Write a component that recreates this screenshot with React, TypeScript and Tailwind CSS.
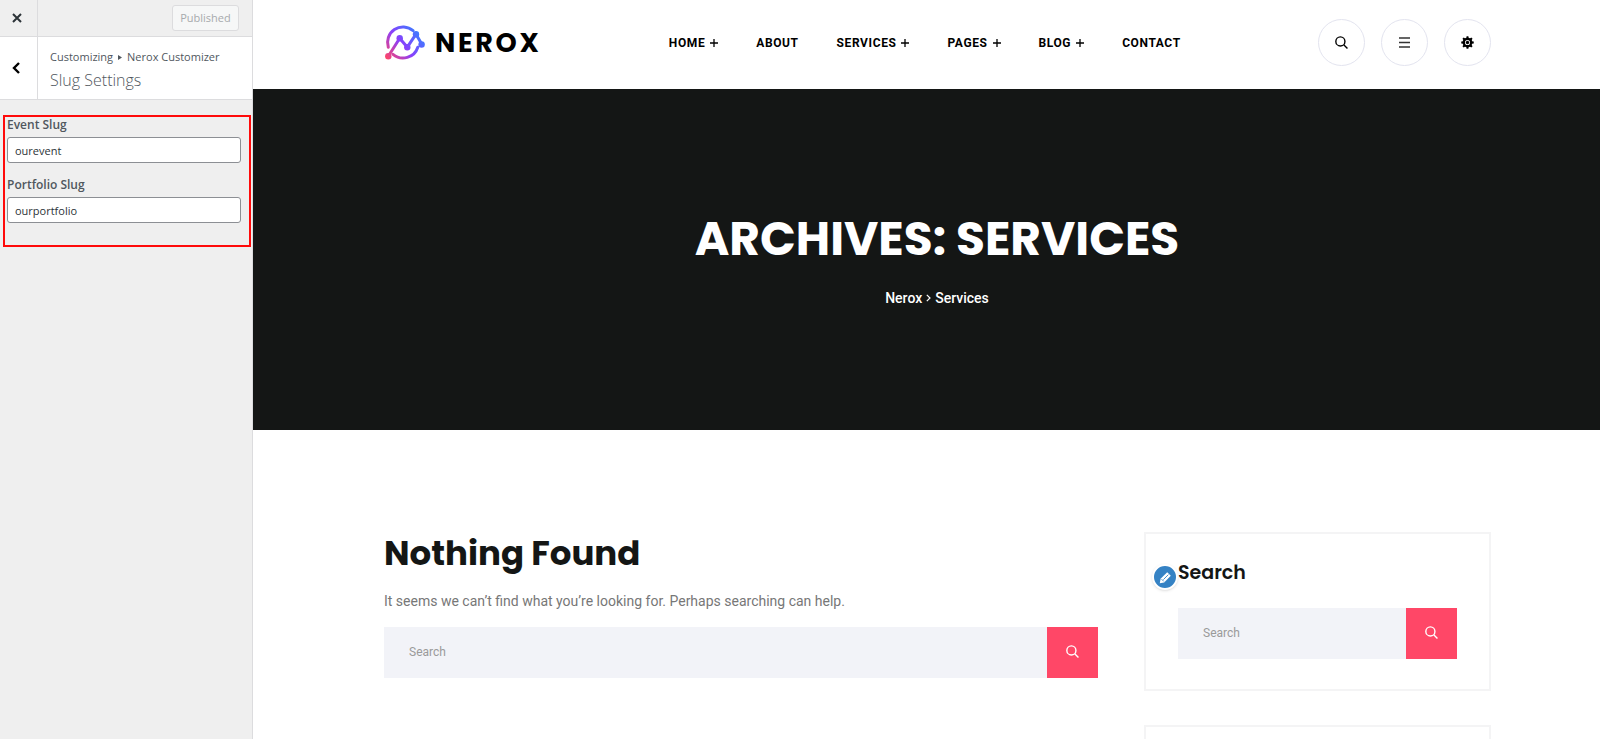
import { useState } from 'react';

const NAV_ITEMS = [
  { label: 'HOME', hasMenu: true },
  { label: 'ABOUT', hasMenu: false },
  { label: 'SERVICES', hasMenu: true },
  { label: 'PAGES', hasMenu: true },
  { label: 'BLOG', hasMenu: true },
  { label: 'CONTACT', hasMenu: false },
];

const GEAR_TEETH = [0, 45, 90, 135, 180, 225, 270, 315];

function SearchIcon({ className }: { className: string }) {
  return (
    <svg className={className} viewBox="0 0 14 14" fill="none" stroke="currentColor" strokeWidth="1.5">
      <circle cx="5.8" cy="5.8" r="4.9" />
      <path d="M9.4 9.4l4 4" />
    </svg>
  );
}

function GearIcon() {
  return (
    <svg className="w-[13px] h-[13px]" viewBox="0 0 26 26" fill="none" stroke="currentColor">
      {GEAR_TEETH.map((angle) => (
        <path key={angle} d="M10.4 5L11.2 0.5h3.6L15.6 5z" fill="currentColor" stroke="none" transform={`rotate(${angle} 13 13)`} />
      ))}
      <circle cx="13" cy="13" r="7.4" strokeWidth="4.6" />
      <circle cx="13" cy="13" r="3.4" fill="currentColor" stroke="none" />
    </svg>
  );
}

function Logo() {
  return (
    <a href="#home" className="flex items-center gap-[10px] text-black">
      <svg className="w-[41px] h-9" viewBox="0 0 41 36" fill="none">
        <defs>
          <linearGradient id="logoStroke" gradientUnits="userSpaceOnUse" x1="2" y1="33" x2="34" y2="6">
            <stop offset="0" stopColor="#ff4568" />
            <stop offset="0.5" stopColor="#8a3ffc" />
            <stop offset="1" stopColor="#3d7bff" />
          </linearGradient>
        </defs>
        <g stroke="url(#logoStroke)" strokeWidth="3" strokeLinecap="round" strokeLinejoin="round">
          <path d="M4.3 22.3A15.5 15.5 0 0 1 29.1 5.7" />
          <path d="M33.8 22.2A15.5 15.5 0 0 1 9 29.3" />
          <path d="M4.3 31.2L15.7 13.2L23.3 22.2L32 9.2L38 19.5" />
        </g>
        <g fill="url(#logoStroke)">
          <circle cx="4.3" cy="31.2" r="3.2" />
          <circle cx="15.7" cy="13.2" r="3.2" />
          <circle cx="23.3" cy="22.2" r="3.2" />
          <circle cx="32" cy="9.2" r="3.2" />
          <circle cx="37.6" cy="19.5" r="3.2" />
        </g>
      </svg>
      <span className="font-[Poppins,Inter,sans-serif] text-[27px] leading-9 font-bold tracking-widest">NEROX</span>
    </a>
  );
}

function SlugField({ id, label, initial }: { id: string; label: string; initial: string }) {
  const [value, setValue] = useState(initial);

  return (
    <div>
      <label htmlFor={id} className="block text-[12px] leading-[14px] font-semibold text-[#50575e]">
        {label}
      </label>
      <input
        id={id}
        type="text"
        value={value}
        onChange={(e) => setValue(e.target.value)}
        className="block w-full h-[26px] mt-[5px] px-[7px] rounded-[3px] border border-[#8c8f94] bg-white text-[11px] text-[#2c3338]"
      />
    </div>
  );
}

function SearchForm({ label }: { label: string }) {
  return (
    <form className="flex h-[51px]" onSubmit={(e) => e.preventDefault()}>
      <input
        type="search"
        aria-label={label}
        placeholder="Search"
        className="flex-1 min-w-0 px-[25px] pb-[2px] bg-[#f2f3f8] text-[12px] text-gray-700 placeholder:text-[#9a9a9a]"
      />
      <button type="submit" aria-label={label} className="w-[51px] flex items-center justify-center pb-[2px] bg-[#ff4767] text-white">
        <SearchIcon className="w-[13px] h-[13px]" />
      </button>
    </form>
  );
}

function CustomizerPanel() {
  return (
    <aside className="w-[253px] shrink-0 border-r border-[#dcdcde] bg-[#efefef] font-['Open_Sans',sans-serif]">
      <div className="flex h-[37px] border-b border-[#dcdcde]">
        <button aria-label="Close" className="w-[38px] flex items-center justify-center pr-[3px] border-r border-[#dcdcde] text-[#2c3338]">
          <svg className="w-[10px] h-[10px]" viewBox="0 0 10 10" fill="none" stroke="currentColor" strokeWidth="2">
            <path d="M1 1l8 8M9 1L1 9" />
          </svg>
        </button>
        <div className="flex-1 flex items-center justify-end pr-[13px]">
          <button disabled className="w-[67px] h-[26px] rounded-[3px] border border-[#dcdcde] bg-[#f6f7f7] text-[11px] text-[#a7aaad]">
            Published
          </button>
        </div>
      </div>

      <div className="flex h-[63px] border-b border-[#dcdcde] bg-white">
        <button aria-label="Back" className="w-[38px] flex items-center justify-center pr-[5px] border-r border-[#dcdcde] text-black">
          <svg className="w-2 h-3" viewBox="0 0 8 12" fill="none" stroke="currentColor" strokeWidth="2.4">
            <path d="M7 1L2 6l5 5" />
          </svg>
        </button>
        <div className="pl-3 pt-3">
          <p className="flex items-center text-[11px] leading-4 text-[#50575e]">
            Customizing
            <svg className="w-1 h-[5px] mx-[5px]" viewBox="0 0 4 5" fill="currentColor">
              <path d="M0 0l4 2.5L0 5z" />
            </svg>
            Nerox Customizer
          </p>
          <h3 className="text-[16px] leading-[30px] font-light text-[#50575e]">Slug Settings</h3>
        </div>
      </div>

      <div className="mt-[15px] ml-[3px] mr-px h-[132px] border-2 border-[#ff0a0a] pt-[1px] pl-[2px] pr-[8px] flex flex-col gap-[15px]">
        <SlugField id="event-slug" label="Event Slug" initial="ourevent" />
        <SlugField id="portfolio-slug" label="Portfolio Slug" initial="ourportfolio" />
      </div>
    </aside>
  );
}

function SiteHeader() {
  const roundButton = 'w-[47px] h-[47px] rounded-full border border-[#e3e4ef] flex items-center justify-center text-black';

  return (
    <header className="flex items-center justify-between h-[89px] pb-1 pl-[131px] pr-[109px] bg-white">
      <Logo />
      <nav className="flex gap-[38px] pr-[10px]">
        {NAV_ITEMS.map((item) => (
          <a key={item.label} href={`#${item.label.toLowerCase()}`} className="flex items-center gap-[5px] text-[12px] leading-4 font-bold tracking-wider text-black">
            {item.label}
            {item.hasMenu && (
              <svg className="w-2 h-2" viewBox="0 0 8 8" stroke="currentColor" strokeWidth="1.3">
                <path d="M4 0v8M0 4h8" />
              </svg>
            )}
          </a>
        ))}
      </nav>
      <div className="flex gap-4">
        <button aria-label="Search" className={roundButton}>
          <SearchIcon className="w-[13px] h-[13px]" />
        </button>
        <button aria-label="Menu" className={roundButton}>
          <svg className="w-[11px] h-[11px]" viewBox="0 0 11 11" stroke="#333" strokeWidth="1.5">
            <path d="M0 1h11M0 5.5h11M0 10h11" />
          </svg>
        </button>
        <button aria-label="Settings" className={roundButton}>
          <GearIcon />
        </button>
      </div>
    </header>
  );
}

export default function App() {
  return (
    <div className="flex min-h-screen lg:h-screen lg:overflow-hidden bg-white">
      <CustomizerPanel />

      <div className="flex-1 min-w-0 font-[Roboto,sans-serif]">
        <SiteHeader />

        <section className="h-[341px] flex flex-col items-center pt-[120px] pl-[21px] bg-[#141615] text-white">
          <h1 className="font-[Poppins,Inter,sans-serif] text-[47px] leading-[60px] font-bold">ARCHIVES: SERVICES</h1>
          <p className="flex items-center gap-1 mt-[19px] text-[14px] leading-5 font-medium">
            <a href="#home">Nerox</a>
            <svg className="w-[5px] h-2" viewBox="0 0 5 8" fill="none" stroke="currentColor" strokeWidth="1.2">
              <path d="M0.8 0.8L4 4L0.8 7.2" />
            </svg>
            <span>Services</span>
          </p>
        </section>

        <main className="flex gap-[46px] pt-[102px] pl-[131px] pr-[109px]">
          <div className="flex-1 min-w-0">
            <h2 className="font-[Poppins,Inter,sans-serif] text-[34px] leading-[42px] font-bold text-[#141615]">Nothing Found</h2>
            <p className="mt-4 mb-[15px] text-[14px] leading-[22px] text-[#777]">
              It seems we can’t find what you’re looking for. Perhaps searching can help.
            </p>
            <SearchForm label="Search the site" />
          </div>

          <div className="w-[347px] shrink-0 flex flex-col gap-[34px]">
            <section className="relative h-[159px] border-2 border-[#f4f4f5] pt-[26px] px-8">
              <button
                aria-label="Edit widget"
                className="absolute left-[6px] top-[30px] w-[26px] h-[26px] rounded-full border-2 border-white bg-[#3582c4] shadow flex items-center justify-center text-white"
              >
                <svg className="w-[13px] h-[13px]" viewBox="0 0 13 13" fill="currentColor">
                  <path d="M0.8 12.2l0.8-4.4 6.6-6.6 3.6 3.6-6.6 6.6z" />
                  <path d="M2.6 8.2l2.2 2.2M4.4 8.6l5-5" stroke="#3582c4" strokeWidth="0.9" fill="none" />
                </svg>
              </button>
              <h2 className="font-[Poppins,Inter,sans-serif] text-[19px] leading-[26px] font-semibold text-[#141615]">Search</h2>
              <div className="mt-[22px]">
                <SearchForm label="Search widget" />
              </div>
            </section>
            <section className="h-[159px] border-2 border-[#f4f4f5]" />
          </div>
        </main>
      </div>
    </div>
  );
}
